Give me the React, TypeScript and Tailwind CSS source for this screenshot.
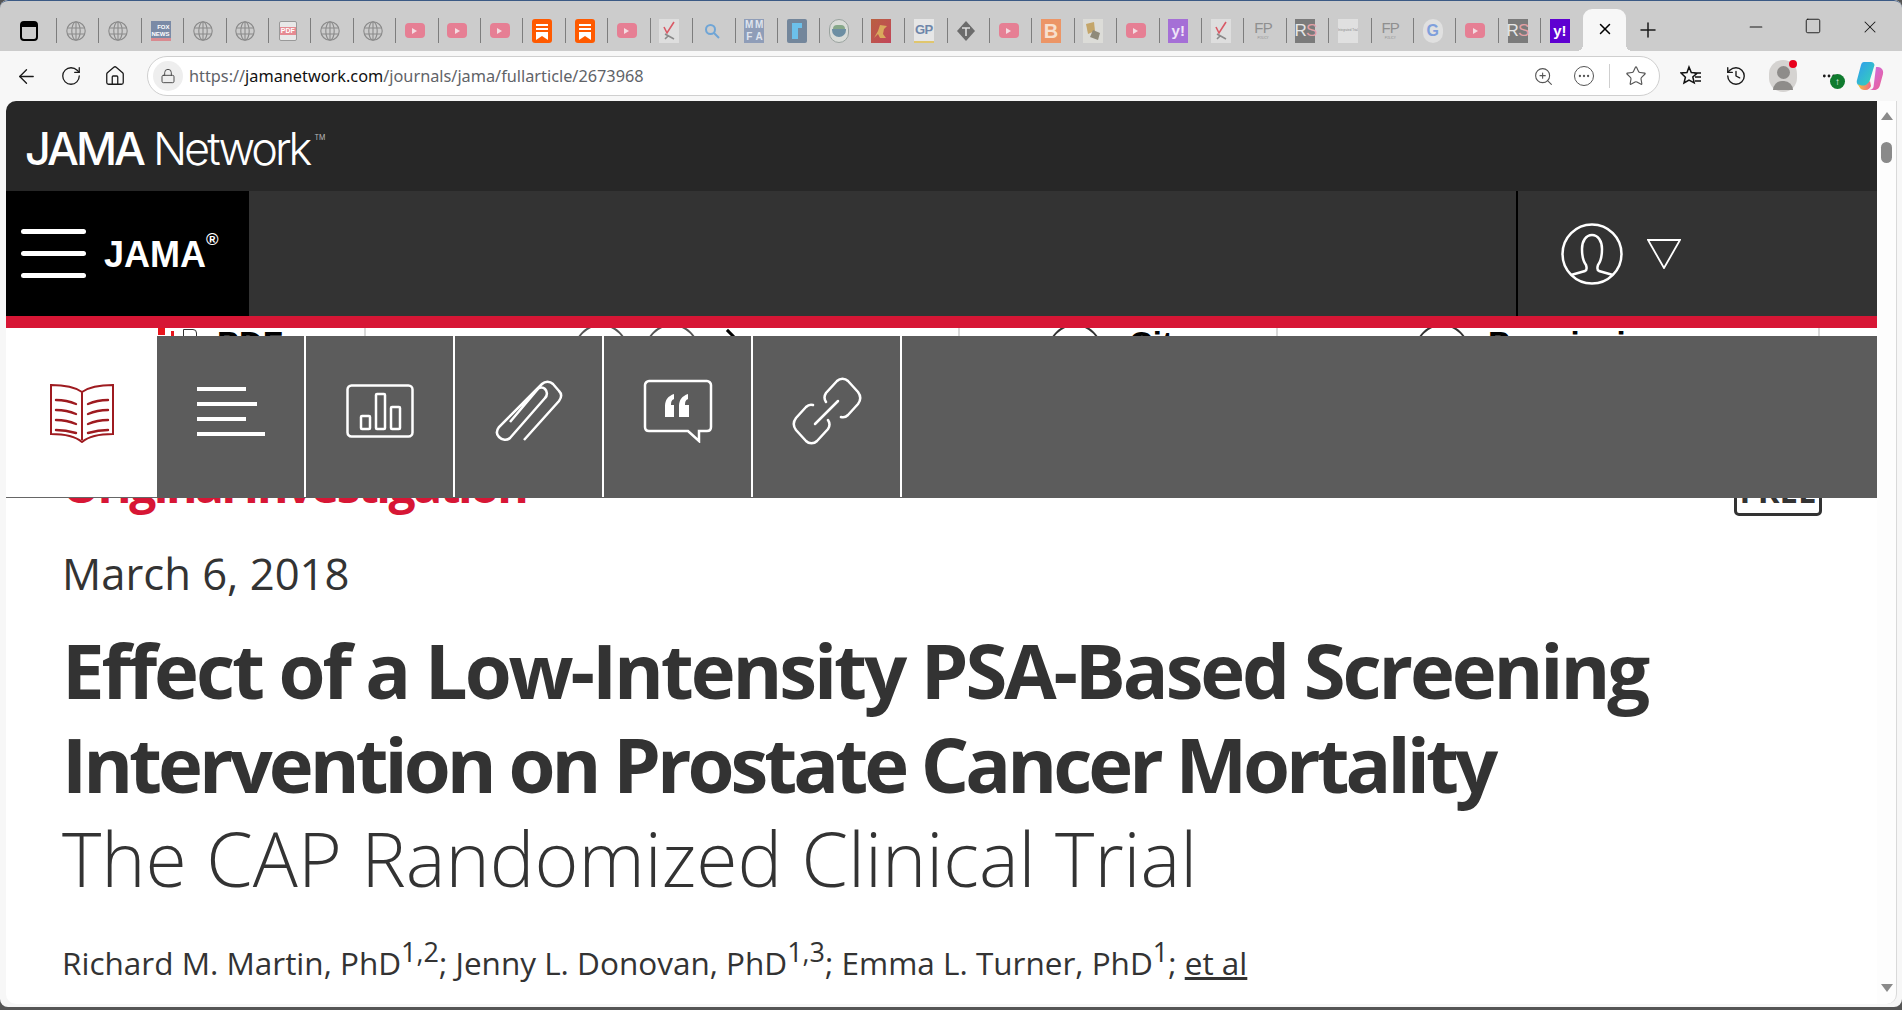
import { ArrowLeft, RotateCw, Home, Lock, ZoomIn, Star, X, Plus, Minus, Square, History, Ellipsis } from "lucide-react";

type Fav =
  | "globe" | "fox" | "pdf" | "yt" | "book" | "check" | "search" | "mmfa" | "blueF" | "seal"
  | "dino" | "gp" | "times" | "breit" | "photo" | "yahooFade" | "fp" | "rs" | "pale" | "google" | "yahoo";

const tabs: Fav[] = [
  "globe", "globe", "fox", "globe", "globe", "pdf", "globe", "globe", "yt", "yt", "yt", "book", "book", "yt",
  "check", "search", "mmfa", "blueF", "seal", "dino", "gp", "times", "yt", "breit", "photo", "yt", "yahooFade", "check", "fp",
  "rs", "pale", "fp", "google", "yt", "rs", "yahoo",
];

const Favicon = ({ kind }: { kind: Fav }) => {
  switch (kind) {
    case "globe":
      return (
        <svg width="20" height="20" viewBox="0 0 20 20" fill="none" stroke="#8a8a8a" strokeWidth="1.1">
          <circle cx="10" cy="10" r="9.2" />
          <ellipse cx="10" cy="10" rx="4.2" ry="9.2" />
          <path d="M1 7h18M1 13h18M10 1v18" />
        </svg>
      );
    case "fox":
      return (
        <div className="w-5 h-5 bg-[#7a8aa6] flex flex-col justify-end overflow-hidden border-b-[3px] border-[#d98a90]">
          <span className="text-[6px] leading-[7px] font-bold text-white text-right pr-[1px] font-['Liberation_Sans',sans-serif]">FOX NEWS</span>
        </div>
      );
    case "pdf":
      return (
        <div className="w-[18px] h-5 bg-[#e8e8e8] border border-[#999] rounded-[2px] flex items-center justify-center">
          <span className="bg-[#e58a92] text-white text-[7px] leading-[8px] font-bold px-[1px] font-['Liberation_Sans',sans-serif]">PDF</span>
        </div>
      );
    case "yt":
      return (
        <div className="w-5 h-[15px] rounded-[4px] bg-[#e67f94] flex items-center justify-center">
          <div className="w-0 h-0 border-y-[3px] border-y-transparent border-l-[5px] border-l-[#f4dce1]" />
        </div>
      );
    case "book":
      return (
        <div className="w-5 h-6 rounded-[3px] bg-[#ff5a00] flex flex-col items-center pt-[5px] gap-[2px]">
          <div className="w-3 h-[2px] bg-white" />
          <div className="w-3 h-[2px] bg-white" />
          <svg width="12" height="8" viewBox="0 0 12 8" fill="#fff"><path d="M0 0h12v8L6 4 0 8z" /></svg>
        </div>
      );
    case "check":
      return (
        <div className="w-5 h-6 bg-[#dedede] flex items-center justify-center">
          <svg width="16" height="20" viewBox="0 0 16 20" fill="none" strokeWidth="1.6">
            <path d="M3 6l3 6 7-11" stroke="#d95a66" />
            <path d="M4 13l9 5M7 15l-3 3" stroke="#8a8a8a" />
          </svg>
        </div>
      );
    case "search":
      return (
        <svg width="16" height="16" viewBox="0 0 16 16" fill="none" stroke="#6fa5d6" strokeWidth="2">
          <circle cx="6.5" cy="6.5" r="4.5" />
          <path d="M10 10l5 5" />
        </svg>
      );
    case "mmfa":
      return (
        <div className="w-5 h-6 bg-[#8f9db8] grid grid-cols-2 text-[10px] leading-[12px] font-bold text-[#dfe4ee] text-center font-['Liberation_Sans',sans-serif]">
          <span>M</span><span>M</span><span>F</span><span>A</span>
        </div>
      );
    case "blueF":
      return (
        <div className="w-5 h-6 rounded-[2px] bg-[#73869b] flex pl-[5px] pt-[4px]">
          <div className="w-[6px] h-4 bg-[#6cc0ea]" />
          <div className="w-1 h-[5px] bg-[#6cc0ea]" />
        </div>
      );
    case "seal":
      return (
        <div className="w-5 h-6 rounded-full bg-[#d9dcd8] border border-[#9aa39f] flex flex-col items-center justify-center">
          <div className="w-3 h-1 rounded-t-full bg-[#86a889]" />
          <div className="w-[14px] h-2 rounded-b-full bg-[#6d8fa3]" />
        </div>
      );
    case "dino":
      return (
        <div className="w-5 h-6 bg-gradient-to-br from-[#b9603f] to-[#c2455a] flex items-center justify-center">
          <svg width="16" height="18" viewBox="0 0 16 18" fill="#d9a95c"><path d="M1 16l4-7 2-6 7 1-3 3-1 5 3 4H7L5 12z" /></svg>
        </div>
      );
    case "gp":
      return (
        <div className="w-5 h-6 bg-[#e6e6e6] border-b-2 border-[#e0c66e] flex items-center justify-center">
          <span className="text-[13px] font-bold text-[#6f86aa] font-['Liberation_Sans',sans-serif] tracking-tighter">GP</span>
        </div>
      );
    case "times":
      return (
        <svg width="20" height="24" viewBox="0 0 20 24">
          <path d="M10 2l9 10-9 10-9-10z" fill="#6b6b6b" />
          <path d="M6 9h8M10 9v8" stroke="#ddd" strokeWidth="1.6" fill="none" />
        </svg>
      );
    case "breit":
      return (
        <div className="w-5 h-6 bg-[#ec9566] flex items-center justify-center">
          <span className="text-[20px] leading-none font-bold text-[#f7dfcd] font-['Liberation_Sans',sans-serif]">B</span>
        </div>
      );
    case "photo":
      return (
        <div className="w-5 h-6 bg-[#dcdcd8] flex items-center justify-center">
          <svg width="18" height="20" viewBox="0 0 18 20"><path d="M2 3l8-2 1 9-7 3z" fill="#c4a66a" /><path d="M9 9l7 3-2 7-8-3z" fill="#8f8a7a" /></svg>
        </div>
      );
    case "yahooFade":
      return (
        <div className="w-5 h-6 bg-[#a56fd6] flex items-center justify-center">
          <span className="text-[15px] leading-none font-bold text-[#f0e4f8] font-['Liberation_Sans',sans-serif]">y!</span>
        </div>
      );
    case "fp":
      return (
        <div className="w-5 h-6 overflow-hidden flex flex-col items-center text-[#8f8f8f] font-['Liberation_Sans',sans-serif]">
          <span className="text-[15px] leading-[17px] tracking-tighter">FP</span>
          <span className="text-[3px] leading-[4px] whitespace-nowrap">POLICY</span>
        </div>
      );
    case "rs":
      return (
        <div className="w-5 h-6 bg-[#7b7b7b] flex items-center justify-center">
          <span className="text-[17px] leading-none font-['Liberation_Sans',sans-serif] text-[#e6e6e6] tracking-tighter">R<span className="text-[#e3a0a6]">S</span></span>
        </div>
      );
    case "pale":
      return (
        <div className="w-5 h-6 bg-[#e0e0e0] flex items-center justify-center overflow-hidden">
          <span className="text-[3px] text-[#8a8a8a] whitespace-nowrap font-['Liberation_Sans',sans-serif]">Integrated Trial</span>
        </div>
      );
    case "google":
      return (
        <div className="w-5 h-6 rounded-full bg-[#e0e0e0] flex items-center justify-center">
          <span className="text-[16px] leading-none font-bold text-[#7f9fdc] font-['Liberation_Sans',sans-serif]">G</span>
        </div>
      );
    case "yahoo":
      return (
        <div className="w-5 h-6 bg-[#5f01d1] flex items-center justify-center">
          <span className="text-[15px] leading-none font-bold text-white font-['Liberation_Sans',sans-serif]">y!</span>
        </div>
      );
  }
};

const TabStrip = () => (
  <div className="h-[51px] bg-[#cccccc] border-t border-[#3b5a85] rounded-t-[8px] flex shrink-0">
    <div className="w-[56px] shrink-0 flex items-center justify-center pt-[9px] pl-[2px]">
      <div className="w-[18px] h-[20px] rounded-[4px] border-2 border-black border-t-[6px]" />
    </div>
    <div className="flex w-[1527px] shrink-0 pt-[17px]">
      {tabs.map((t, i) => (
        <div key={i} className="w-[42.42px] h-[25px] shrink-0 border-l border-[#7d7d7d] flex items-center justify-center pr-[4px]">
          <Favicon kind={t} />
        </div>
      ))}
    </div>
    <div className="relative w-[43px] shrink-0 self-end h-[42px] bg-[#f7f7f7] rounded-t-[9px] flex items-center justify-center pb-[2px]">
      <div className="absolute -left-[6px] bottom-0 w-[6px] h-[6px] bg-[radial-gradient(circle_at_0_0,transparent_6px,#f7f7f7_6px)]" />
      <div className="absolute -right-[6px] bottom-0 w-[6px] h-[6px] bg-[radial-gradient(circle_at_100%_0,transparent_6px,#f7f7f7_6px)]" />
      <X size={18} strokeWidth={2} className="text-black" />
    </div>
    <div className="w-[44px] flex items-center justify-center pt-[8px]">
      <Plus size={24} strokeWidth={1.5} className="text-[#1a1a1a]" />
    </div>
    <div className="flex-1 flex items-start pt-[16px] pl-[76px] gap-[38px] text-[#1a1a1a]">
      <Minus size={20} strokeWidth={1.25} />
      <Square size={18} strokeWidth={1.25} />
      <X size={20} strokeWidth={1.25} />
    </div>
  </div>
);

const Toolbar = () => (
  <div className="h-[50px] bg-[#f7f7f7] flex items-center shrink-0">
    <div className="w-[147px] shrink-0 flex items-center pl-[15px] gap-[22px] text-[#1a1a1a]">
      <ArrowLeft size={23} strokeWidth={1.4} />
      <RotateCw size={22} strokeWidth={1.4} />
      <Home size={22} strokeWidth={1.4} />
    </div>
    <div className="w-[1513px] h-[40px] shrink-0 bg-white border border-[#cfcfcf] rounded-full flex items-center pl-[5px]">
      <div className="w-[30px] h-[30px] rounded-full bg-[#eeeeee] flex items-center justify-center shrink-0">
        <Lock size={16} strokeWidth={1.4} className="text-[#444]" />
      </div>
      <div className="ml-[6px] text-[16.3px] font-['Noto_Sans',sans-serif] text-[#5f6368] whitespace-nowrap">
        https://<span className="text-[#111]">jamanetwork.com</span>/journals/jama/fullarticle/2673968
      </div>
      <div className="ml-auto flex items-center text-[#555] pr-[12px]">
        <ZoomIn size={21} strokeWidth={1.25} />
        <div className="ml-[20px] w-[20px] h-[20px] rounded-full border border-[#555] flex items-center justify-center">
          <Ellipsis size={14} strokeWidth={2} />
        </div>
        <div className="ml-[15px] w-px h-[24px] bg-[#cfcfcf]" />
        <Star size={22} strokeWidth={1.25} className="ml-[15px]" />
      </div>
    </div>
    <div className="flex-1 flex items-center pl-[20px] text-[#1a1a1a]">
      <svg width="22" height="22" viewBox="0 0 22 22" fill="none" stroke="#111" strokeWidth="1.5">
        <path d="M9 2l2.300 5.500 6 .5-4.500 4 1.400 5.800L9 15l-5 3 1.400-5.800L1 8l6-.5zM14 8h7M15 12h6M15 16h6" />
      </svg>
      <History size={22} strokeWidth={1.5} className="ml-[23px]" />
      <div className="relative ml-[22px] w-[28px] h-[32px] rounded-[14px] bg-[#d5d3d1] flex flex-col items-center overflow-visible">
        <div className="w-[13px] h-[13px] mt-[6px] rounded-full bg-[#8e8c8a]" />
        <div className="w-[20px] h-[9px] mt-[2px] rounded-t-full bg-[#8e8c8a]" />
        <div className="absolute right-0 top-0 w-[8px] h-[8px] rounded-full bg-[#e8001c]" />
      </div>
      <div className="relative ml-[21px] w-[22px] flex justify-center">
        <Ellipsis size={16} strokeWidth={2.2} />
        <div className="absolute left-[12px] top-[6px] w-[15px] h-[15px] rounded-full bg-[#0f7b2e] flex items-center justify-center text-white text-[10px] leading-none font-bold font-['Liberation_Sans',sans-serif]">↑</div>
      </div>
      <svg className="ml-[16px]" width="28" height="30" viewBox="0 0 28 30">
        <defs>
          <linearGradient id="cpa" x1="0" y1="0" x2="1" y2="1"><stop offset="0" stopColor="#2f9bf0" /><stop offset="1" stopColor="#37d6b4" /></linearGradient>
          <linearGradient id="cpb" x1="0" y1="0" x2="1" y2="1"><stop offset="0" stopColor="#c86df0" /><stop offset="1" stopColor="#ef5f8e" /></linearGradient>
          <linearGradient id="cpc" x1="0" y1="0" x2="1" y2="0"><stop offset="0" stopColor="#f4c23a" /><stop offset="1" stopColor="#f2658a" /></linearGradient>
        </defs>
        <path d="M8 1h7c2 0 3 1 3.500 3L13 22c-.5 2-2 3-4 3H5c-3 0-5-3-4-6L5 4c.5-2 1.500-3 3-3z" fill="url(#cpa)" />
        <path d="M20 6h2c3 0 6 3 5 7l-3 11c-.5 3-3 5-6 5h-5c2 0 4-1 4.500-3z" fill="url(#cpb)" />
        <path d="M2 23c3 2 7 2 9 0l3-3 1 5c-.5 2-3 4-5 4H8c-3 0-5-3-6-6z" fill="url(#cpc)" />
      </svg>
    </div>
  </div>
);

const BookIcon = () => (
  <svg width="66" height="60" viewBox="0 0 66 60" fill="none" stroke="#9e1b20" strokeWidth="2">
    <path d="M33 9C26 4 14 2 2 2v49c12 0 24 2 31 8 7-6 19-8 31-8V2C52 2 40 4 33 9zM33 9v48" />
    <g strokeWidth="2.4" strokeLinecap="round">
      <path d="M7 17c6 0 13 1 20 4M7 27c6 0 13 1 20 4M7 37c6 0 13 1 20 4M7 47c5 0 13 1 20 3" />
      <path d="M59 17c-6 0-13 1-20 4M59 27c-6 0-13 1-20 4M59 37c-6 0-13 1-20 4M59 47c-5 0-13 1-20 3" />
    </g>
  </svg>
);

const LinesIcon = () => (
  <div className="w-[68px] flex flex-col gap-[11px]">
    <div className="w-[49px] h-1 bg-white" />
    <div className="w-[60px] h-1 bg-white" />
    <div className="w-[49px] h-1 bg-white" />
    <div className="w-[68px] h-1 bg-white" />
  </div>
);

const ChartIcon = () => (
  <svg width="68" height="54" viewBox="0 0 68 54" fill="none" stroke="#fff" strokeWidth="2.5">
    <rect x="1.500" y="1.500" width="65" height="51" rx="4" />
    <rect x="15" y="32" width="9" height="13" rx="1" />
    <rect x="30" y="10" width="9" height="35" rx="1" />
    <rect x="45" y="23" width="9" height="22" rx="1" />
  </svg>
);

const ClipIcon = () => (
  <svg width="68" height="62" viewBox="0 0 68 62" fill="none" stroke="#fff" strokeWidth="2.500">
    <path d="M29 60L64 21c3-4 3-7 0-10l-6-7c-3-3-8-3-11 0L4 47c-3 4-3 7 0 10s8 4 11 1L50 18c3-3 2-7 0-9s-6-2-8 1L15 42" />
  </svg>
);

const QuoteIcon = () => (
  <svg width="70" height="64" viewBox="0 0 70 64" fill="none">
    <path d="M6 2h58c2 0 4 2 4 4v42c0 3-2 4-4 4H56v10L45 52H6c-2 0-4-1-4-4V6c0-2 2-4 4-4z" stroke="#fff" strokeWidth="2.500" />
    <path d="M22 38V27c0-6 3-10 9-12v5c-2 1-3 2-3 6h3v12zM36 38V27c0-6 3-10 9-12v5c-2 1-3 2-3 6h4v12z" fill="#fff" />
  </svg>
);

const LinkIcon = () => (
  <svg width="70" height="68" viewBox="0 0 70 68" fill="none" stroke="#fff" strokeWidth="2.500" strokeLinecap="round">
    <path d="M34 25c-2-3-2-6 0-9L45 4c3-3 8-3 11 0l10 11c3 4 3 8 0 12L56 38c-2 2-4 3-7 2" />
    <path d="M36 43c2 3 2 6 0 9L25 64c-3 3-8 3-11 0L4 53c-3-4-3-8 0-12l10-11c2-2 4-3 7-2" />
    <path d="M46 24L23 47" />
  </svg>
);

const StripBits = () => (
  <div className="h-2 bg-white overflow-hidden flex font-['Liberation_Sans',sans-serif] font-bold text-[33px] leading-none text-black">
    <div className="w-[360px] h-full border-r-2 border-[#d9d9d9] flex pl-[152px] items-start">
      <div className="w-[7px] h-[7px] bg-[#e8141c]" />
      <div className="w-[3px] h-[5px] bg-[#e8141c] ml-[6px] mt-[3px]" />
      <div className="w-[14px] h-[10px] border border-[#333] ml-[9px] mt-[1px] rounded-tr-[4px]" />
      <span className="ml-[20px] -mt-[1px]">PDF</span>
    </div>
    <div className="w-[594px] h-full border-r-2 border-[#d9d9d9] flex pl-[208px] items-start">
      <div className="w-[54px] h-[54px] shrink-0 rounded-full border-2 border-[#555] -mt-[4px]" />
      <div className="w-[54px] h-[54px] shrink-0 rounded-full border-2 border-[#555] -mt-[4px] ml-[17px]" />
      <div className="w-[20px] h-[20px] shrink-0 border-t-[3px] border-r-[3px] border-black rotate-45 ml-[19px] mt-[5px]" />
    </div>
    <div className="w-[318px] h-full border-r-2 border-[#d9d9d9] flex pl-[88px] items-start">
      <div className="w-[54px] h-[54px] shrink-0 rounded-full border-2 border-[#333] -mt-[4px]" />
      <span className="ml-[27px] -mt-[1px]">Cite</span>
    </div>
    <div className="w-[542px] h-full border-r-2 border-[#d9d9d9] flex pl-[137px] items-start">
      <div className="w-[54px] h-[54px] shrink-0 rounded-full border-2 border-[#333] -mt-[4px]" />
      <span className="ml-[19px] -mt-[1px]">Permissions</span>
    </div>
  </div>
);

const NavCell = ({ children }: { children: React.ReactNode }) => (
  <div className="w-[149px] h-[161px] shrink-0 border-r-2 border-white flex items-center justify-center pb-[11px]">{children}</div>
);

const Article = () => (
  <div className="relative flex-1 bg-white rounded-bl-[10px] overflow-hidden">
    <StripBits />
    <div className="pl-[56px] pr-[55px] font-['Open_Sans',sans-serif] text-[#333]">
      <div className="flex justify-between items-start mt-[120px]">
        <h3 className="text-[48px] leading-[58px] font-bold text-[#d71635] tracking-[-2.500px] [font-stretch:88%]">Original Investigation</h3>
        <span className="mt-[10px] w-[88px] h-[50px] border-[3px] border-[#333] rounded-[5px] text-[33px] leading-[44px] font-bold text-center [font-stretch:88%]">FREE</span>
      </div>
      <p className="mt-[27px] text-[43.600px] leading-[60px] [font-stretch:100%]">March 6, 2018</p>
      <h1 className="mt-[20px] text-[76px] leading-[94px] font-bold tracking-[-3.100px] [font-stretch:88%]">
        Effect of a Low-Intensity PSA-Based Screening
        <br />
        <span className="tracking-[-4px]">Intervention on Prostate Cancer Mortality</span>
        <br />
        <span className="text-[75px] font-light tracking-normal [font-stretch:100%]">The CAP Randomized Clinical Trial</span>
      </h1>
      <p className="mt-[36px] text-[31.500px] leading-[44px] [font-stretch:100%]">
        Richard M. Martin, PhD<sup className="text-[27px]">1,2</sup>; Jenny L. Donovan, PhD<sup className="text-[27px]">1,3</sup>; Emma L. Turner, PhD<sup className="text-[27px]">1</sup>; <span className="underline">et al</span>
      </p>
    </div>

    {/* sticky article nav lies over the content */}
    <div className="absolute left-0 right-0 top-2 h-[162px] flex">
      <div className="w-[151px] shrink-0 bg-white border-b border-[#666] flex items-center justify-center pb-[8px]">
        <BookIcon />
      </div>
      <div className="flex-1 bg-[#5c5c5c] flex">
        <NavCell><LinesIcon /></NavCell>
        <NavCell><ChartIcon /></NavCell>
        <NavCell><ClipIcon /></NavCell>
        <NavCell><QuoteIcon /></NavCell>
        <NavCell><LinkIcon /></NavCell>
      </div>
    </div>
  </div>
);

const PageHeader = () => (
  <div className="shrink-0">
    <div className="h-[90px] bg-[#272727] rounded-tl-[10px] flex items-center pl-[19px] pt-[6px] text-white whitespace-nowrap font-['Inter',sans-serif] text-[45px] tracking-[-3px]">
      <span className="font-medium">JAMA</span>
      <span className="ml-[10px] font-light">Network</span>
      <span className="self-start mt-[26px] ml-[5px] text-[7px] tracking-normal text-[#bbb]">TM</span>
    </div>
    <div className="h-[125px] bg-[#333333] flex">
      <div className="w-[243px] bg-black flex items-center pl-[15px]">
        <div className="w-[65px] flex flex-col gap-[17px]">
          <div className="h-[5px] rounded-full bg-white" />
          <div className="h-[5px] rounded-full bg-white" />
          <div className="h-[5px] rounded-full bg-white" />
        </div>
        <span className="ml-[18px] mt-[3px] flex items-start text-white font-bold text-[36px] leading-none font-['Liberation_Sans',sans-serif]">
          JAMA<span className="mt-[-6px] text-[17px] leading-[17px]">®</span>
        </span>
      </div>
      <div className="flex-1 border-r-2 border-black" />
      <div className="w-[359px] flex items-center pl-[43px]">
        <svg width="62" height="62" viewBox="0 0 62 62" fill="none" stroke="#fff" strokeWidth="2.500">
          <circle cx="31" cy="31" r="29.500" />
          <path d="M10 52l14-4c2-1 2-3 1-6-3-4-4-9-4-16 0-8 4-14 10-14s10 6 10 14c0 7-1 12-4 16-1 3-1 5 1 6l14 4" />
        </svg>
        <svg className="ml-[24px]" width="34" height="30" viewBox="0 0 34 30" fill="none" stroke="#fff" strokeWidth="1.800">
          <path d="M1 1h32L17 29z" />
        </svg>
      </div>
    </div>
    <div className="h-3 bg-[#d71635]" />
  </div>
);

const Scrollbar = () => (
  <div className="w-[20px] shrink-0 bg-[#fdfdfd] border-r border-[#d9d9d9] rounded-br-[10px] flex flex-col items-center">
    <div className="mt-[11px] w-0 h-0 border-x-[6px] border-x-transparent border-b-[8px] border-b-[#8a8a8a]" />
    <div className="mt-[22px] w-[11px] h-[21px] rounded-full bg-[#8a8a8a]" />
    <div className="mt-auto mb-[12px] w-0 h-0 border-x-[6px] border-x-transparent border-t-[8px] border-t-[#8a8a8a]" />
  </div>
);

export default function App() {
  return (
    <div className="w-[1902px] h-[1010px] bg-[#555] overflow-hidden flex flex-col">
      <div className="h-[1007px] bg-[#f7f7f7] rounded-[8px] flex flex-col overflow-hidden">
        <TabStrip />
        <Toolbar />
        <div className="flex-1 min-h-0 flex pl-[6px] pr-[5px] pb-[3px]">
          <div className="w-[1871px] shrink-0 flex flex-col">
            <PageHeader />
            <Article />
          </div>
          <Scrollbar />
        </div>
      </div>
    </div>
  );
}
